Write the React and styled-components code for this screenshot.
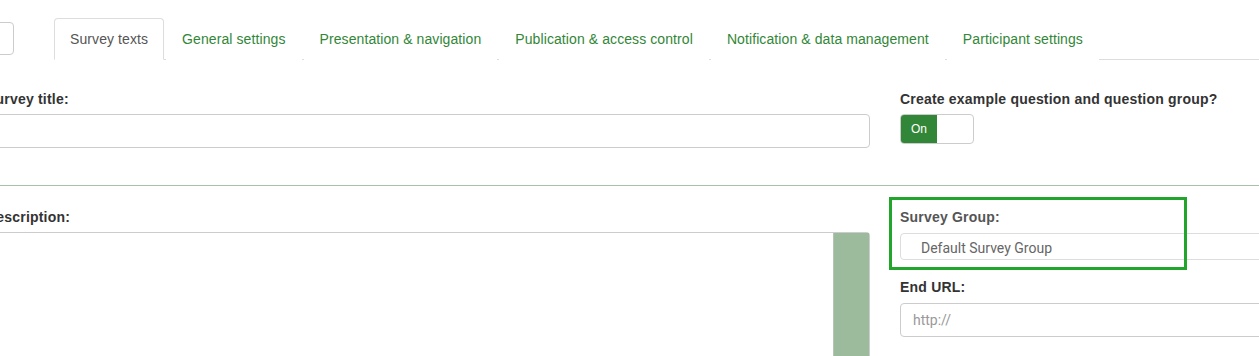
import React from 'react'
import styled, { createGlobalStyle } from 'styled-components'

const GlobalStyle = createGlobalStyle`
	body {
		margin: 0;
		background: #fff;
		font-family: 'Liberation Sans', Arial, sans-serif;
		overflow: hidden;
	}
`

const Page = styled.div`
	width: 1259px;
	height: 356px;
	overflow: hidden;
	background: #fff;
`

const TopBar = styled.div`
	display: flex;
	align-items: flex-end;
	height: 60px;
`

const Stub = styled.div`
	align-self: flex-start;
	margin: 22px 0 0 -27px;
	width: 39px;
	height: 31px;
	border: 1px solid #ccc;
	border-radius: 4px;
	background: #fff;
`

const Tabs = styled.ul`
	display: flex;
	flex: 1;
	margin: 0 0 0 40px;
	padding: 0;
	list-style: none;
	border-bottom: 1px solid #ddd;
`

const Tab = styled.li`
	margin: 0 2px -1px 0;
	padding: 10px 15px;
	line-height: 20px;
	font-size: 14px;
	letter-spacing: 0.09px;
	color: ${p => (p.active ? '#555' : '#328637')};
	background: #fff;
	border: 1px solid ${p => (p.active ? '#ddd' : 'transparent')};
	border-bottom-color: ${p => (p.active ? '#fff' : 'transparent')};
	border-radius: 4px 4px 0 0;
	white-space: nowrap;
`

const Row = styled.div`
	display: grid;
	grid-template-columns: 884px 420px;
	column-gap: 30px;
	margin-left: -14px;
	padding: ${p => p.pad};
`

const Divider = styled.div`
	height: 1px;
	background: #abc0ab;
`

const Field = styled.div`
	position: relative;
	display: flex;
	flex-direction: column;
`

const Label = styled.label`
	font-family: 'Liberation Sans', Arial, sans-serif;
	font-weight: bold;
	font-size: 14px;
	letter-spacing: 0.2px;
	line-height: 20px;
	color: ${p => (p.muted ? '#555' : '#333')};
	margin-bottom: ${p => p.gap || 5}px;
	white-space: nowrap;
`

const TextInput = styled.div`
	box-sizing: border-box;
	height: ${p => p.h || 34}px;
	border: 1px solid #ccc;
	border-radius: 4px;
	padding: 0 12px;
	display: flex;
	align-items: center;
	font-family: Roboto, 'Liberation Sans', sans-serif;
	font-size: 14px;
	color: #999;
`

const Select = styled(TextInput)`
	border-color: #ddd;
	padding: 3px 0 0 20px;
	color: #666;
`

const Toggle = styled.div`
	box-sizing: border-box;
	display: flex;
	width: 74px;
	height: 30px;
	border: 1px solid #ccc;
	border-radius: 4px;
	overflow: hidden;
`

const ToggleOn = styled.span`
	width: 36px;
	background: #328637;
	color: #fff;
	font-size: 12px;
	display: flex;
	align-items: center;
	justify-content: center;
`

const Editor = styled.div`
	display: flex;
	justify-content: flex-end;
	height: 140px;
	border-top: 1px solid #ccc;
	border-right: 1px solid #ccc;
	border-top-right-radius: 4px;
`

const Scroll = styled.div`
	width: 35px;
	background: #9cba9c;
	border-left: 1px solid #b8c2b8;
`

const Highlight = styled.div`
	position: absolute;
	left: -11px;
	top: -10px;
	width: 292px;
	height: 67px;
	border: 3px solid #22a52b;
	pointer-events: none;
`

const RightStack = styled.div`
	display: flex;
	flex-direction: column;
	gap: 17px;
`

const tabs = [
	'Survey texts',
	'General settings',
	'Presentation & navigation',
	'Publication & access control',
	'Notification & data management',
	'Participant settings',
]

export default function App() {
	return (
		<Page>
			<GlobalStyle />
			<TopBar>
				<Stub />
				<Tabs>
					{tabs.map((t, i) => (
						<Tab key={t} active={i === 0}>
							{t}
						</Tab>
					))}
				</Tabs>
			</TopBar>

			<Row pad='29px 0 37px'>
				<Field>
					<Label>Survey title:</Label>
					<TextInput />
				</Field>
				<Field>
					<Label>Create example question and question group?</Label>
					<Toggle>
						<ToggleOn>On</ToggleOn>
					</Toggle>
				</Field>
			</Row>
			<Divider />

			<Row pad='21px 0 0'>
				<Field>
					<Label>Description:</Label>
					<Editor>
						<Scroll />
					</Editor>
				</Field>
				<RightStack>
					<Field>
						<Label muted gap={6}>Survey Group:</Label>
						<Select h={27}>Default Survey Group</Select>
						<Highlight />
					</Field>
					<Field>
						<Label gap={6}>End URL:</Label>
						<TextInput>http://</TextInput>
					</Field>
				</RightStack>
			</Row>
		</Page>
	)
}
